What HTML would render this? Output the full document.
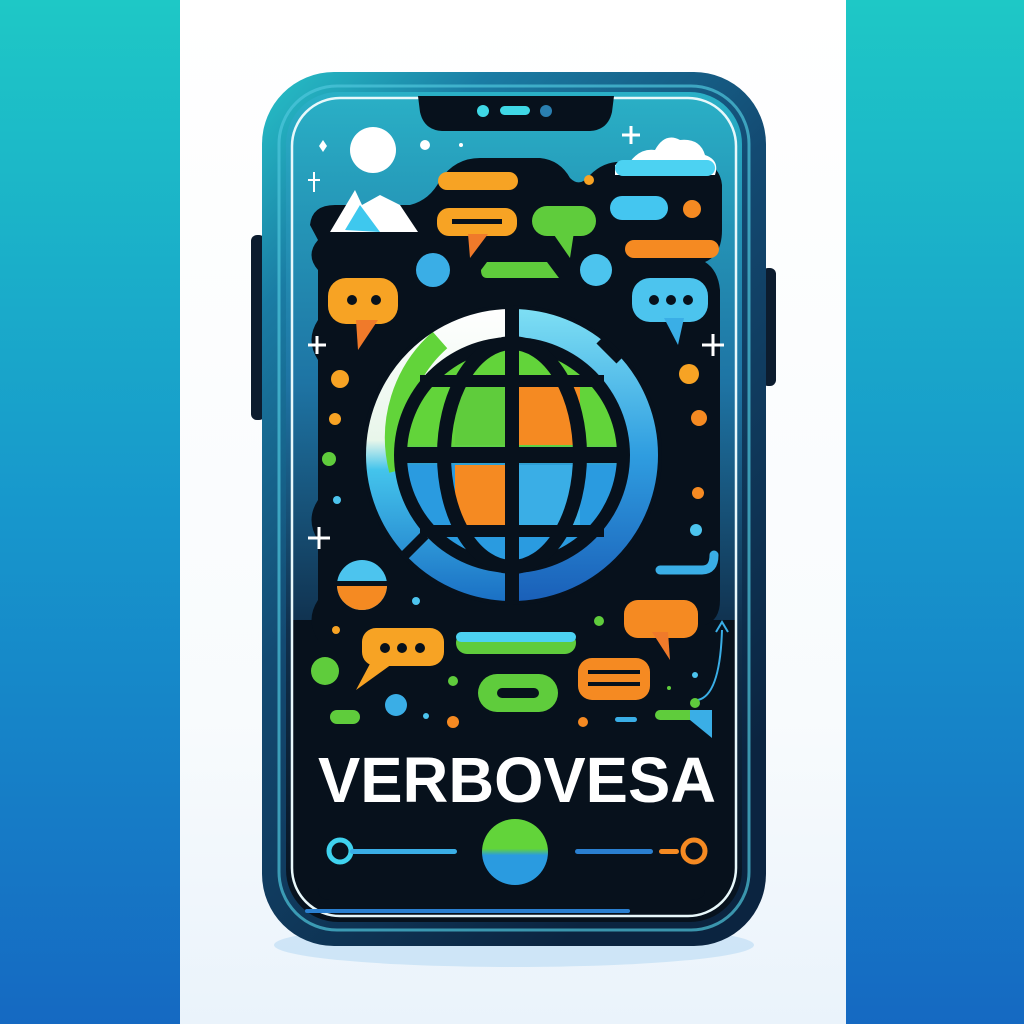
<!DOCTYPE html>
<html><head><meta charset="utf-8"><style>
html,body{margin:0;padding:0;width:1024px;height:1024px;overflow:hidden;background:#fff}
svg{display:block}
</style></head><body>
<svg width="1024" height="1024" viewBox="0 0 1024 1024" xmlns="http://www.w3.org/2000/svg">
<defs>
<linearGradient id="side" x1="0" y1="0" x2="0" y2="1">
<stop offset="0" stop-color="#1ec8c6"/><stop offset="0.5" stop-color="#1797cc"/><stop offset="1" stop-color="#1569c2"/></linearGradient>
<linearGradient id="mid" x1="0" y1="0" x2="0" y2="1">
<stop offset="0" stop-color="#ffffff"/><stop offset="0.7" stop-color="#f8fbfd"/><stop offset="1" stop-color="#eaf3fb"/></linearGradient>
<linearGradient id="frame" x1="0" y1="0" x2="0.6" y2="1">
<stop offset="0" stop-color="#27c2c8"/><stop offset="0.2" stop-color="#1a7ca4"/><stop offset="0.5" stop-color="#134a72"/><stop offset="1" stop-color="#0b2440"/></linearGradient>
<linearGradient id="scr" x1="0" y1="0" x2="0" y2="1">
<stop offset="0" stop-color="#2ab0c6"/><stop offset="0.35" stop-color="#1e74a4"/><stop offset="0.65" stop-color="#10304d"/><stop offset="1" stop-color="#07111c"/></linearGradient>
<linearGradient id="globeL" x1="0" y1="0" x2="0" y2="1">
<stop offset="0" stop-color="#ffffff"/><stop offset="0.45" stop-color="#e8f6ea"/><stop offset="0.55" stop-color="#44c4ec"/><stop offset="1" stop-color="#1a6fc4"/></linearGradient>
<linearGradient id="globeR" x1="0" y1="0" x2="0" y2="1">
<stop offset="0" stop-color="#7fe0f4"/><stop offset="0.5" stop-color="#2f9de0"/><stop offset="1" stop-color="#1a5fb8"/></linearGradient>
<linearGradient id="gb" x1="0" y1="0" x2="0" y2="1"><stop offset="0.45" stop-color="#62d43a"/><stop offset="0.55" stop-color="#2a9be0"/></linearGradient>
</defs>
<rect x="0" y="0" width="180" height="1024" fill="url(#side)"/>
<rect x="846" y="0" width="178" height="1024" fill="url(#side)"/>
<rect x="180" y="0" width="666" height="1024" fill="url(#mid)"/>
<ellipse cx="514" cy="945" rx="240" ry="22" fill="#a8d2f2" opacity="0.45"/>
<rect x="251" y="235" width="14" height="185" rx="6" fill="#0c1c2e"/>
<rect x="762" y="268" width="14" height="118" rx="6" fill="#0c1c2e"/>
<rect x="262" y="72" width="504" height="874" rx="72" fill="url(#frame)"/>
<rect x="279" y="86" width="470" height="844" rx="58" fill="none" stroke="#4fc6dc" stroke-width="3" opacity="0.7"/>
<rect x="286" y="92" width="456" height="830" rx="52" fill="url(#scr)"/>
<path d="M292 620 L736 620 L736 868 Q736 916 688 916 L340 916 Q292 916 292 868 Z" fill="#07111c"/>
<rect x="292" y="98" width="444" height="818" rx="48" fill="none" stroke="#e8f8fb" stroke-width="2.5"/>
<path d="M418 96 L420 112 Q424 130 442 131 L590 131 Q608 130 612 112 L614 96 Z" fill="#07111c"/>
<circle cx="483" cy="111" r="6" fill="#3fd8e6"/><rect x="500" y="106" width="30" height="9" rx="4.5" fill="#3fd8e6"/><circle cx="546" cy="111" r="6" fill="#2a7fb0"/>
<path d="M310 225 Q312 205 335 205 L410 205 Q430 200 440 180 Q455 158 480 158 L540 158 Q560 160 570 178 Q580 188 590 175 Q605 160 625 162 L700 162 Q720 165 722 185 L722 230 Q722 255 705 262 Q718 270 720 290 L720 600 Q720 620 705 625 L705 890 Q705 900 690 900 L330 900 Q318 900 318 888 L318 640 Q305 620 318 600 L318 540 Q305 520 318 500 L318 360 Q305 340 318 320 L318 270 Q305 255 318 240 Z" fill="#07111c"/>
<circle cx="373" cy="150" r="23" fill="#fff"/>
<circle cx="425" cy="145" r="5" fill="#fff"/><circle cx="461" cy="145" r="2" fill="#fff"/>
<path d="M308 180 h12 M314 172 v20" stroke="#fff" stroke-width="2"/>
<path d="M323 140 l4 6 -4 6 -4 -6 z" fill="#fff"/>
<path d="M330 232 L355 190 L362 205 L380 195 L400 205 L418 232 Z" fill="#fff"/>
<path d="M345 230 L360 205 L380 232 Z" fill="#3ec8ee"/>
<path d="M622 135 h18 M631 126 v18" stroke="#fff" stroke-width="3"/>
<path d="M615 175 L715 175 Q720 160 705 155 Q700 138 680 140 Q665 132 655 150 Q640 148 630 162 L615 165 Z" fill="#fff"/>
<rect x="615" y="160" width="100" height="16" rx="8" fill="#4cd2f2"/>
<rect x="438" y="172" width="80" height="18" rx="9" fill="#f7a324"/>
<rect x="437" y="208" width="80" height="28" rx="12" fill="#f7a324"/>
<rect x="452" y="219" width="50" height="5" fill="#07111c"/>
<path d="M468 234 L470 258 L488 234 Z" fill="#f07a2a"/>
<rect x="532" y="206" width="64" height="30" rx="15" fill="#5fcc3c"/>
<path d="M552 232 L570 258 L574 232 Z" fill="#5fcc3c"/>
<rect x="610" y="196" width="58" height="24" rx="12" fill="#44c6f0"/>
<circle cx="692" cy="209" r="9" fill="#f58a22"/>
<circle cx="589" cy="180" r="5" fill="#f7a324"/>
<rect x="625" y="240" width="94" height="18" rx="9" fill="#f58a22"/>
<circle cx="433" cy="270" r="17" fill="#3aaee6"/>
<path d="M487 262 h60 l12 16 h-72 q-6 0 -6 -8 z" fill="#5fcc3c"/>
<circle cx="596" cy="270" r="16" fill="#4cc4ee"/>
<rect x="328" y="278" width="70" height="46" rx="18" fill="#f7a324"/>
<path d="M356 320 L358 350 L378 320 Z" fill="#f07a2a"/>
<circle cx="352" cy="300" r="5" fill="#07111c"/><circle cx="376" cy="300" r="5" fill="#07111c"/>
<rect x="632" y="278" width="76" height="44" rx="18" fill="#4cc4ee"/>
<path d="M664 318 L678 345 L684 318 Z" fill="#3aaee6"/>
<circle cx="654" cy="300" r="5" fill="#07111c"/><circle cx="671" cy="300" r="5" fill="#07111c"/><circle cx="688" cy="300" r="5" fill="#07111c"/>
<path d="M308 345 h18 M317 336 v18" stroke="#fff" stroke-width="3"/>
<path d="M702 345 h22 M713 334 v22" stroke="#fff" stroke-width="3"/>
<path d="M308 538 h22 M319 527 v22" stroke="#fff" stroke-width="3"/>
<circle cx="340" cy="379" r="9" fill="#f7a324"/><circle cx="335" cy="419" r="6" fill="#f7a324"/>
<circle cx="329" cy="459" r="7" fill="#5fcc3c"/><circle cx="337" cy="500" r="4" fill="#4cc4ee"/>
<circle cx="689" cy="374" r="10" fill="#f7a324"/><circle cx="699" cy="418" r="8" fill="#f58a22"/>
<circle cx="698" cy="493" r="6" fill="#f58a22"/><circle cx="696" cy="530" r="6" fill="#4cc4ee"/>
<path d="M660 570 h42 q12 0 12 -15" stroke="#3aaee6" stroke-width="9" fill="none" stroke-linecap="round"/>
<circle cx="512" cy="455" r="148" fill="url(#globeR)"/>
<path d="M512 307 A148 148 0 0 0 512 603 Z" fill="url(#globeL)"/>
<path d="M440 340 A130 130 0 0 0 400 470" stroke="#62d43a" stroke-width="22" fill="none"/>
<circle cx="512" cy="455" r="118" fill="#07111c"/>
<circle cx="512" cy="455" r="105" fill="url(#gb)"/>
<rect x="455" y="385" width="57" height="60" fill="#5fcc3c"/>
<rect x="512" y="385" width="68" height="60" fill="#f58a22"/>
<rect x="455" y="465" width="57" height="60" fill="#f58a22"/>
<rect x="512" y="465" width="68" height="60" fill="#3aaee6"/>
<ellipse cx="512" cy="455" rx="68" ry="112" fill="none" stroke="#07111c" stroke-width="14"/>
<rect x="505" y="300" width="14" height="305" fill="#07111c"/>
<rect x="400" y="447" width="224" height="16" fill="#07111c"/>
<rect x="420" y="375" width="184" height="12" fill="#07111c"/>
<rect x="420" y="525" width="184" height="12" fill="#07111c"/>
<path d="M600 340 L620 360 M425 535 L405 555" stroke="#07111c" stroke-width="10"/>
<circle cx="512" cy="455" r="148" fill="none" stroke="#07111c" stroke-width="4"/>
<circle cx="362" cy="585" r="25" fill="#4cc4ee"/><path d="M337 585 a25 25 0 0 0 50 0 z" fill="#f58a22"/><rect x="337" y="581" width="50" height="5" fill="#07111c"/>
<circle cx="416" cy="601" r="4" fill="#4cc4ee"/>
<circle cx="336" cy="630" r="4" fill="#f7a324"/>
<rect x="362" y="628" width="82" height="38" rx="14" fill="#f7a324"/>
<path d="M372 660 L356 690 L392 664 Z" fill="#f7a324"/>
<circle cx="385" cy="648" r="5" fill="#07111c"/><circle cx="402" cy="648" r="5" fill="#07111c"/><circle cx="420" cy="648" r="5" fill="#07111c"/>
<circle cx="325" cy="671" r="14" fill="#5fcc3c"/>
<rect x="330" y="710" width="30" height="14" rx="7" fill="#5fcc3c"/>
<circle cx="396" cy="705" r="11" fill="#3aaee6"/>
<circle cx="426" cy="716" r="3" fill="#4cc4ee"/>
<circle cx="453" cy="722" r="6" fill="#f58a22"/>
<circle cx="453" cy="681" r="5" fill="#5fcc3c"/>
<rect x="456" y="632" width="120" height="22" rx="11" fill="#5fcc3c"/>
<rect x="456" y="632" width="120" height="10" rx="5" fill="#4cd2f2"/>
<rect x="478" y="674" width="80" height="38" rx="19" fill="#5fcc3c"/>
<rect x="497" y="688" width="42" height="10" rx="5" fill="#07111c"/>
<rect x="578" y="658" width="72" height="42" rx="14" fill="#f58a22"/>
<rect x="588" y="670" width="52" height="4" fill="#07111c"/><rect x="588" y="682" width="52" height="4" fill="#07111c"/>
<circle cx="583" cy="722" r="5" fill="#f58a22"/>
<rect x="615" y="717" width="22" height="5" rx="2.5" fill="#3aaee6"/>
<circle cx="599" cy="621" r="5" fill="#5fcc3c"/>
<rect x="624" y="600" width="74" height="38" rx="14" fill="#f58a22"/>
<path d="M652 632 L670 660 L668 632 Z" fill="#f07a2a"/>
<path d="M698 700 Q720 695 722 630" stroke="#3aaee6" stroke-width="2" fill="none"/>
<path d="M716 632 L722 622 L728 632" stroke="#3aaee6" stroke-width="2" fill="none"/>
<circle cx="695" cy="675" r="3" fill="#4cc4ee"/><circle cx="695" cy="703" r="5" fill="#5fcc3c"/>
<circle cx="669" cy="688" r="2" fill="#5fcc3c"/>
<path d="M660 710 h30 v10 h-30 a5 5 0 0 1 0 -10z" fill="#5fcc3c"/>
<path d="M690 710 h22 v28 l-22 -18 z" fill="#3aaee6"/>
<text x="318" y="802" textLength="398" lengthAdjust="spacingAndGlyphs" font-family="Liberation Sans, sans-serif" font-weight="bold" font-size="64" fill="#fff">VERBOVESA</text>
<circle cx="340" cy="851" r="11" fill="none" stroke="#3fd2ee" stroke-width="5"/>
<rect x="350" y="849" width="107" height="5" rx="2.5" fill="#3aaee6"/>
<circle cx="515" cy="852" r="33" fill="url(#gb)"/>
<rect x="575" y="849" width="78" height="5" rx="2.5" fill="#2a7fd0"/>
<rect x="659" y="849" width="20" height="5" rx="2.5" fill="#f58a22"/>
<circle cx="694" cy="851" r="11" fill="none" stroke="#f58a22" stroke-width="5"/>
<rect x="305" y="909" width="325" height="4" rx="2" fill="#2a7fd0"/>
</svg>
</body></html>
